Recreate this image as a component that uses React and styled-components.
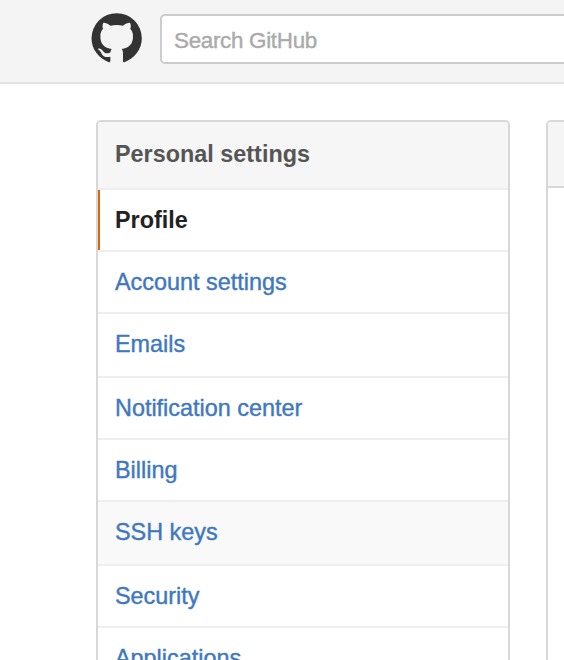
import React from "react";
import styled, { createGlobalStyle } from "styled-components";

const GlobalStyle = createGlobalStyle`
  * { box-sizing: border-box; }
  html, body { margin: 0; background: #fff; overflow: hidden; }
  body { font-family: "Liberation Sans", Helvetica, Arial, sans-serif; }
`;

const Page = styled.div`
  height: 660px;
  overflow: hidden;
  background: #fff;
`;

const Header = styled.header`
  display: flex;
  align-items: flex-start;
  gap: 18px;
  height: 84px;
  padding: 13px 0 0 91px;
  background: #f4f4f4;
  border-bottom: 2px solid #e4e4e4;
`;

const Logo = styled.svg`
  flex: none;
  width: 51px;
  height: 51px;
  fill: #333;
`;

const Search = styled.input`
  flex: none;
  width: 640px;
  height: 50px;
  margin-top: 1px;
  padding: 3px 12px 0;
  border: 2px solid #ccc;
  border-radius: 5px;
  background: #fff;
  font: 22.4px "Liberation Sans", Helvetica, Arial, sans-serif;
  letter-spacing: -0.3px;
  outline: none;
  &::placeholder { color: #aaa; opacity: 1; -webkit-text-stroke: 0.4px #aaa; }
`;

const Content = styled.main`
  display: flex;
  align-items: flex-start;
  gap: 36px;
  padding: 36px 0 0 96px;
`;

const Menu = styled.nav`
  flex: none;
  width: 414px;
  border: 2px solid #d8d8d8;
  border-radius: 5px;
  overflow: hidden;
`;

const MenuHeading = styled.h3`
  height: 68px;
  margin: 0;
  padding: 0 17px;
  border-bottom: 2px solid #eee;
  background: #f6f6f6;
  color: #555;
  font-size: 23.4px;
  font-weight: bold;
  line-height: 64px;
`;

const MenuItem = styled.a`
  display: block;
  height: ${(p) => (p.$tall ? 64 : 62)}px;
  padding-left: 17px;
  border-bottom: 2px solid #eee;
  background: ${(p) => (p.$hovered ? "#f9f9f9" : "#fff")};
  color: #4078c0;
  font-size: 23.4px;
  line-height: 60px;
  text-decoration: none;
  -webkit-text-stroke: 0.4px #4078c0;
`;

const CurrentItem = styled(MenuItem)`
  display: flex;
  padding-left: 0;
  color: #222;
  font-weight: bold;
  -webkit-text-stroke: 0;
  &::before {
    content: "";
    width: 2px;
    height: 60px;
    margin-right: 15px;
    background: #d26911;
  }
`;

const Panel = styled.section`
  flex: none;
  width: 800px;
  height: 800px;
  border: 2px solid #d8d8d8;
  border-radius: 5px;
  overflow: hidden;
`;

const PanelHeading = styled.div`
  height: 66px;
  border-bottom: 2px solid #d8d8d8;
  background: #f5f5f5;
`;

const items = [
  { label: "Account settings" },
  { label: "Emails", tall: true },
  { label: "Notification center" },
  { label: "Billing" },
  { label: "SSH keys", tall: true, hovered: true },
  { label: "Security" },
  { label: "Applications" },
];

export default function App() {
  return (
    <Page>
      <GlobalStyle />
      <Header>
        <Logo viewBox="9 9 153 153" aria-label="GitHub">
          <path d="M86 9.500A75.500 75.500 0 0 0 10.500 85C10.500 118 33 147 63 156.500Q67 157.500 67 153V140C55 143 45 140 41 131C38 124 34 121 30 118C28 115 35 114 40 118C46 123 48 130 56 130C61 130 66 129 67.500 127C68 123 69 120 71 117C50 114 37 104 37 78C37 69 40 62 45 57C43 50 43 44 46 38.500C53 38.500 61 42 67 47Q86 43.500 105 47C111 42 119 38.500 126 38.500C129 44 129 50 127 57C132 62 135 69 135 78C135 104 122 114 101 117C104 120 105 125 105 131V153Q105 157.500 109 156.500C139 147 161.500 118 161.500 85A75.500 75.500 0 0 0 86 9.500Z" />
        </Logo>
        <Search type="text" placeholder="Search GitHub" />
      </Header>
      <Content>
        <Menu>
          <MenuHeading>Personal settings</MenuHeading>
          <CurrentItem>Profile</CurrentItem>
          {items.map((item) => (
            <MenuItem key={item.label} $tall={item.tall} $hovered={item.hovered}>
              {item.label}
            </MenuItem>
          ))}
        </Menu>
        <Panel>
          <PanelHeading />
        </Panel>
      </Content>
    </Page>
  );
}
